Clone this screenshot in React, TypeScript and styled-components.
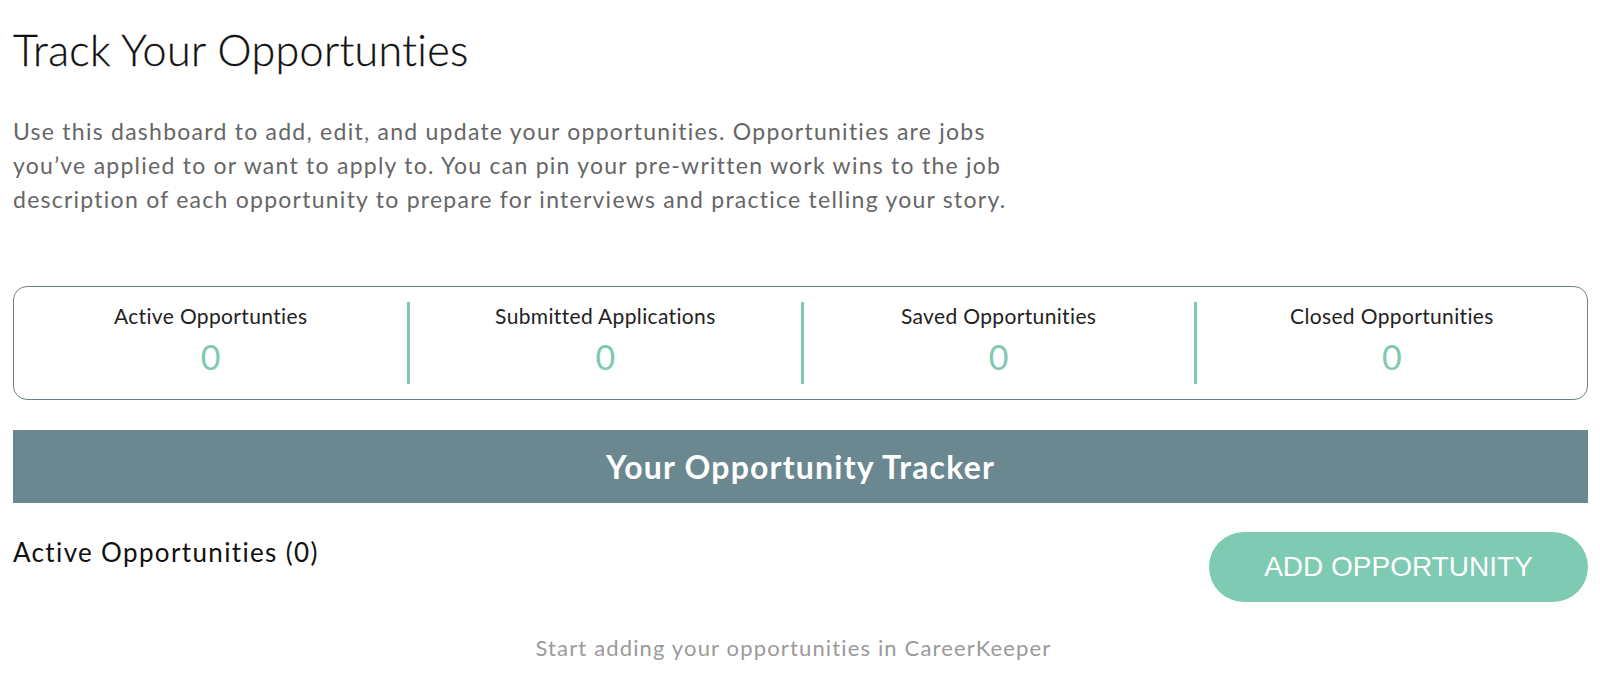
import styled, {createGlobalStyle} from "styled-components";

const GlobalStyle = createGlobalStyle`
    body {
        margin: 0;
        background: #fff;
        font-family: Lato, "Open Sans", sans-serif;
    }
`

const Page = styled.div`
    padding: 0 12px 0 13px;
`

const Title = styled.h1`
    margin: 24px 0 0;
    font-size: 43px;
    font-weight: 300;
    letter-spacing: 0.35px;
    line-height: 52px;
    color: #111;
    -webkit-text-stroke: 0.3px #111;
`

const Intro = styled.p`
    margin: 38px 0 0;
    max-width: 1012px;
    font-size: 23px;
    letter-spacing: 1.25px;
    line-height: 34px;
    color: #666;
`

const StatsCard = styled.div`
    display: grid;
    grid-template-columns: repeat(4, 1fr);
    margin-top: 70px;
    height: 114px;
    box-sizing: border-box;
    padding: 15px 0;
    border: 1.5px solid #6d8088;
    border-radius: 14px;
`

const Stat = styled.div<{ $first?: boolean }>`
    display: flex;
    flex-direction: column;
    align-items: center;
    border-left: ${p => p.$first ? "none" : "3px solid #7ec9b0"};
`

const StatLabel = styled.div`
    margin-top: 1px;
    font-size: 21px;
    letter-spacing: 0.35px;
    color: #222;
`

const StatValue = styled.div`
    margin-top: 9px;
    font-size: 34px;
    line-height: 40px;
    color: #7ec9b0;
`

const Banner = styled.div`
    display: flex;
    align-items: center;
    justify-content: center;
    margin-top: 30px;
    height: 73px;
    background: #6b8891;
    color: #fff;
    font-size: 32px;
    font-weight: 700;
    letter-spacing: 1.2px;
`

const ListHeader = styled.div`
    display: flex;
    justify-content: space-between;
    align-items: flex-start;
    margin-top: 29px;
`

const ListTitle = styled.h2`
    margin: 4px 0 0;
    font-size: 26px;
    font-weight: 400;
    letter-spacing: 1.35px;
    color: #111;
`

const AddButton = styled.button`
    width: 379px;
    height: 70px;
    border: none;
    border-radius: 35px;
    background: #7ecab2;
    color: #fff;
    font-family: "Liberation Sans", Arial, sans-serif;
    font-size: 28px;
    cursor: pointer;
`

const EmptyNote = styled.div`
    margin-top: 32px;
    padding-right: 14px;
    text-align: center;
    font-size: 22px;
    letter-spacing: 1.15px;
    color: #9a9a9a;
`

const stats = [
    {label: "Active Opportunties", value: 0},
    {label: "Submitted Applications", value: 0},
    {label: "Saved Opportunities", value: 0},
    {label: "Closed Opportunities", value: 0},
]

export default function App() {
    return (
        <>
            <GlobalStyle/>
            <Page>
                <Title>Track Your Opportunties</Title>
                <Intro>
                    Use this dashboard to add, edit, and update your opportunities. Opportunities are jobs
                    you’ve applied to or want to apply to. You can pin your pre-written work wins to the job
                    description of each opportunity to prepare for interviews and practice telling your story.
                </Intro>
                <StatsCard>
                    {stats.map((s, i) => (
                        <Stat key={s.label} $first={i === 0}>
                            <StatLabel>{s.label}</StatLabel>
                            <StatValue>{s.value}</StatValue>
                        </Stat>
                    ))}
                </StatsCard>
                <Banner>Your Opportunity Tracker</Banner>
                <ListHeader>
                    <ListTitle>Active Opportunities (0)</ListTitle>
                    <AddButton>ADD OPPORTUNITY</AddButton>
                </ListHeader>
                <EmptyNote>Start adding your opportunities in CareerKeeper</EmptyNote>
            </Page>
        </>
    )
}
